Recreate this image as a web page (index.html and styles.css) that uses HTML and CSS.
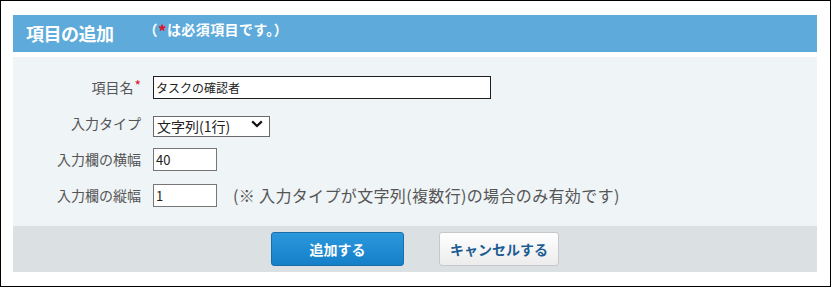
FILE: index.html
```html
<!DOCTYPE html>
<html lang="ja">
<head>
<meta charset="utf-8">
<link rel="stylesheet" href="styles.css">
</head>
<body>
<div class="frame">
  <div class="header">
    <span class="title">項目の追加</span>
    <span class="sub">（<span class="req">*</span>は必須項目です。）</span>
  </div>
  <div class="form">
    <div class="label">項目名<span class="req-s">*</span></div>
    <div class="field"><input class="text wide" type="text" value="タスクの確認者"></div>

    <div class="label">入力タイプ</div>
    <div class="field">
      <div class="select-wrap">
        <select class="select"><option>文字列(1行)</option></select>
        <svg class="chev" width="12" height="8" viewBox="0 0 12 8"><path d="M1.2 1.4 L6 6 L10.8 1.4" fill="none" stroke="#111" stroke-width="2.2"/></svg>
      </div>
    </div>

    <div class="label">入力欄の横幅</div>
    <div class="field"><input class="text small" type="text" value="40"></div>

    <div class="label">入力欄の縦幅</div>
    <div class="field"><input class="text small" type="text" value="1"><span class="note">(※ 入力タイプが文字列(複数行)の場合のみ有効です)</span></div>
  </div>
  <div class="footer">
    <button class="btn primary">追加する</button>
    <button class="btn cancel">キャンセルする</button>
  </div>
</div>
</body>
</html>
```

FILE: styles.css
```css
* { box-sizing: border-box; }
body {
  margin: 0;
  background: #fff;
  font-family: "Noto Sans CJK JP", "Noto Sans", sans-serif;
}
.frame {
  width: 831px;
  height: 287px;
  border: 1px solid #000;
  padding: 14px 0 0 12px;
  background: #fff;
}
.header {
  width: 804px;
  height: 37px;
  background: #5eabdb;
  display: flex;
  align-items: flex-start;
  padding-left: 13px;
  color: #fff;
  font-weight: bold;
}
.title {
  font-size: 18px;
  line-height: 20px;
  margin-top: 8px;
  letter-spacing: -0.5px;
}
.sub {
  font-size: 14px;
  letter-spacing: 0.4px;
  line-height: 16px;
  margin-top: 6px;
  margin-left: 30px;
}
.req {
  color: #e0102a;
  font-size: 17px;
  line-height: 16px;
  vertical-align: -3px;
}
.form {
  width: 804px;
  margin-top: 5px;
  height: 169px;
  background: #eff4f7;
  padding-top: 12px;
  display: grid;
  grid-template-columns: 128px 1fr;
  grid-auto-rows: 36px;
  column-gap: 12px;
  align-items: center;
}
.label {
  text-align: right;
  font-size: 14px;
  line-height: 18px;
  color: #555;
  white-space: nowrap;
}
.req-s {
  color: #e0102a;
  font-size: 14px;
  line-height: 14px;
  vertical-align: 2px;
  margin-left: 1px;
}
.field {
  display: flex;
  align-items: center;
}
.text {
  font-family: "Noto Sans CJK JP", "Noto Sans", sans-serif;
  color: #222;
  background: #fff;
  padding: 0 2px;
  margin: 0;
  outline: none;
}
.wide {
  width: 338px;
  height: 23px;
  border: 1px solid #1e1e1e;
  font-size: 12px;
}
.small {
  width: 64px;
  height: 23px;
  border: 1px solid #767676;
  font-size: 13px;
}
.select-wrap {
  position: relative;
  width: 117px;
  height: 21px;
}
.select {
  appearance: none;
  -webkit-appearance: none;
  width: 117px;
  height: 21px;
  border: 1px solid #6a6a6a;
  border-radius: 0;
  background: #fff;
  font-family: "Noto Sans CJK JP", "Noto Sans", sans-serif;
  font-size: 14px;
  color: #222;
  padding: 0 0 0 3px;
  margin: 0;
  line-height: 19px;
}
.chev {
  position: absolute;
  right: 7px;
  top: 7px;
  pointer-events: none;
}
.note {
  margin-left: 16px;
  font-size: 16px;
  letter-spacing: 0.35px;
  color: #555;
  line-height: 20px;
  white-space: nowrap;
}
.footer {
  width: 804px;
  height: 46px;
  background: #dbe0e3;
  display: flex;
  justify-content: center;
  align-items: center;
  gap: 35px;
}
.btn {
  height: 34px;
  border-radius: 3px;
  font-family: "Noto Sans CJK JP", "Noto Sans", sans-serif;
  font-size: 14px;
  font-weight: bold;
  padding: 0;
  margin: 0;
}
.primary {
  width: 133px;
  color: #fff;
  background: linear-gradient(#2b97dc, #1580c9);
  border: 1px solid #1a6eaa;
}
.cancel {
  width: 120px;
  color: #1d5d93;
  background: linear-gradient(#ffffff, #ececec);
  border: 1px solid #c6c9cb;
}
```
